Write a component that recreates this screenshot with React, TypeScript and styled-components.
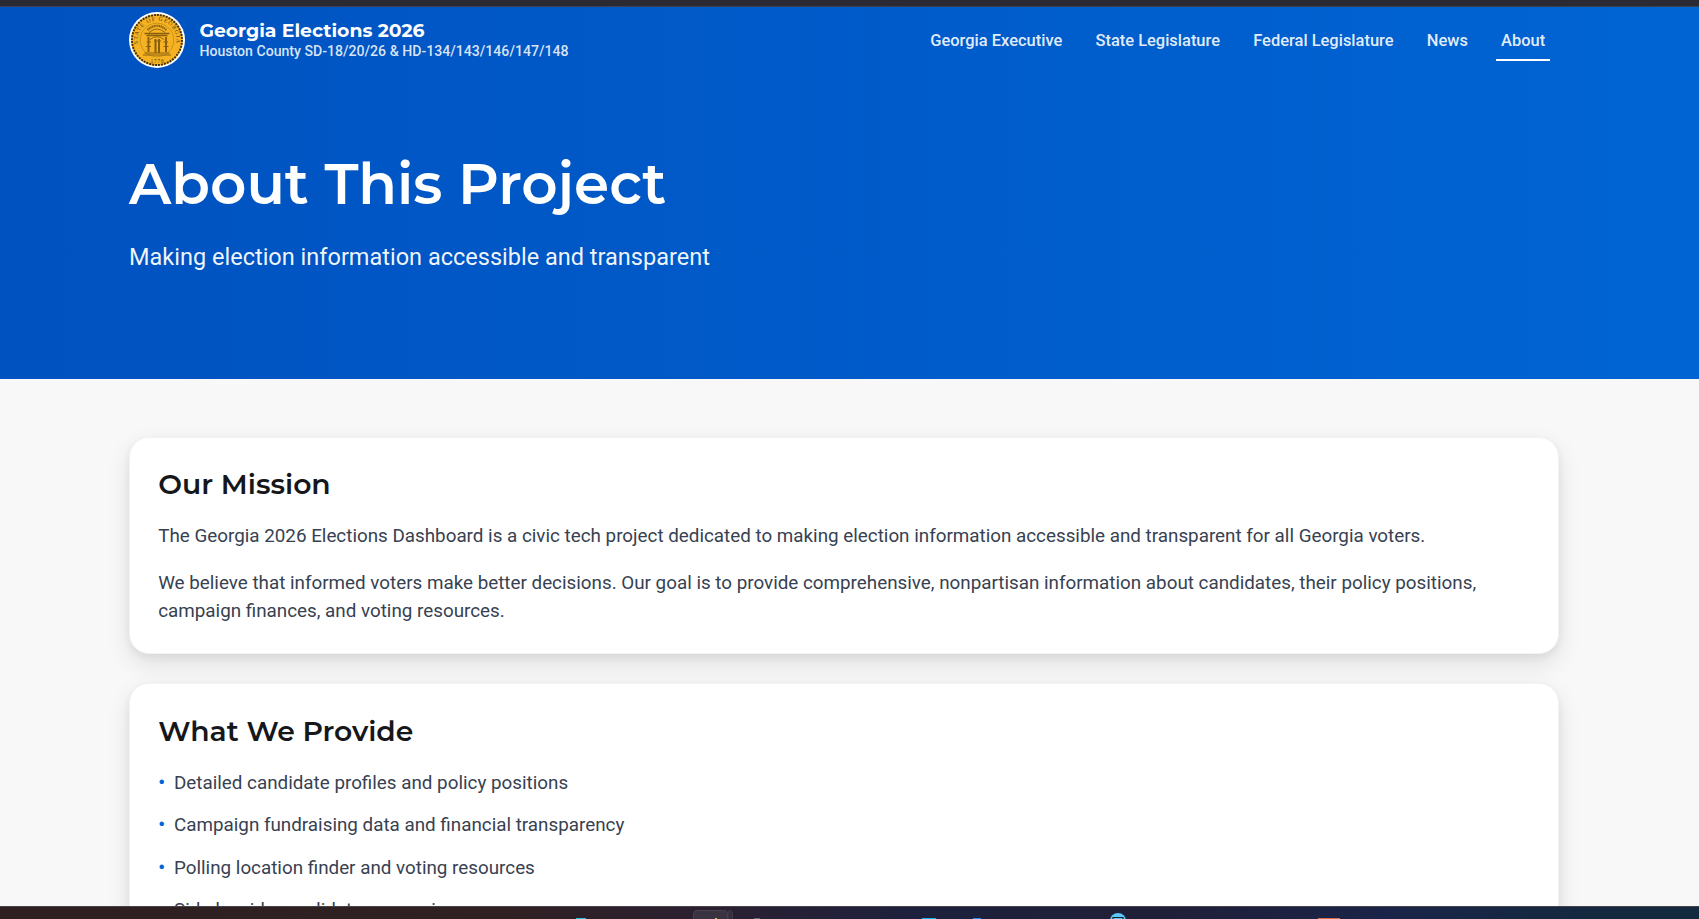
import React from "react";
import styled, { createGlobalStyle } from "styled-components";

const Global = createGlobalStyle`
  * { box-sizing: border-box; }
  html { font-size: 18.82px; }
  body { margin: 0; background: #f8f8f8; font-family: Roboto, sans-serif; }
  h1, h2, p, ul { margin: 0; padding: 0; }
`;

const display = "Montserrat, Inter, sans-serif";

const Screen = styled.div`
  height: 919px;
  display: flex;
  flex-direction: column;
  overflow: hidden;
`;

const BrowserEdge = styled.div`
  flex: none;
  height: 7px;
  background: #2b2a33;
  border-bottom: 1px solid #3d404d;
`;

const Viewport = styled.div`
  flex: 1;
  min-height: 0;
  overflow: hidden;
`;

const Hero = styled.header`
  height: 372px;
  padding: 5px 140px 0 129px;
  background: linear-gradient(90deg, #0052c0 0%, #0064d3 100%);
`;

const TopBar = styled.div`
  display: flex;
  align-items: center;
  justify-content: space-between;
  height: 56px;
  padding-right: 9px;
`;

const Brand = styled.div`
  display: flex;
  align-items: center;
  gap: 14.4px;
`;

const BrandName = styled.div`
  font-family: ${display};
  font-size: 1rem;
  font-weight: 700;
  line-height: 22px;
  color: #fff;
`;

const BrandSub = styled.div`
  font-size: 0.75rem;
  font-weight: 500;
  line-height: 18px;
  color: rgba(255, 255, 255, 0.85);
`;

const Nav = styled.nav`
  display: flex;
  gap: 23.6px;
`;

const NavLink = styled.a<{ $active?: boolean }>`
  padding: 11px 4.8px 8px;
  border-bottom: 2px solid ${(p) => (p.$active ? "#fff" : "transparent")};
  font-size: 0.875rem;
  font-weight: 500;
  line-height: 20px;
  color: rgba(255, 255, 255, 0.9);
`;

const HeroTitle = styled.h1`
  margin-top: 81px;
  font-family: ${display};
  font-size: 3rem;
  font-weight: 600;
  line-height: 69px;
  color: #fff;
`;

const HeroSub = styled.p`
  margin-top: 21px;
  font-size: 1.25rem;
  line-height: 36px;
  color: rgba(255, 255, 255, 0.95);
`;

const Main = styled.main`
  display: flex;
  flex-direction: column;
  gap: 28.7px;
  padding: 57.6px 140px 0 129px;
`;

const Card = styled.section`
  padding: 28.4px 28.2px 27.9px;
  border: 1px solid #f3f3f3;
  border-radius: 20px;
  background: #fff;
  box-shadow: 0 10px 24px rgba(0, 0, 0, 0.1), 0 3px 8px rgba(0, 0, 0, 0.06);
`;

const CardTitle = styled.h2`
  margin-bottom: 20.1px;
  font-family: ${display};
  font-size: 1.5rem;
  font-weight: 600;
  line-height: 36px;
  color: #15171a;
`;

const Paragraph = styled.p`
  font-size: 1rem;
  line-height: 1.5;
  color: #374151;
  & + & { margin-top: 18.8px; }
`;

const List = styled.ul`
  display: flex;
  flex-direction: column;
  gap: 0.75rem;
  padding-top: 0.4px;
  list-style: none;
`;

const Item = styled.li`
  display: flex;
  gap: 9.8px;
  font-size: 1rem;
  line-height: 1.5;
  color: #374151;
  &::before { content: "•"; width: 6px; font-weight: 700; color: #0066d6; }
`;

const Taskbar = styled.footer`
  flex: none;
  height: 13px;
  border-top: 1px solid #48424a;
  overflow: hidden;
  background: linear-gradient(90deg, #2e2021 0%, #2f2022 30%, #2b2032 42%, #1d213c 54%, #201f38 68%, #1a2448 82%, #14293f 93%, #13293d 100%);
`;

const brandSub = "Houston County SD-18/20/26 & HD-134/143/146/147/148";
const links = ["Georgia Executive", "State Legislature", "Federal Legislature", "News", "About"];
const provided = [
  "Detailed candidate profiles and policy positions",
  "Campaign fundraising data and financial transparency",
  "Polling location finder and voting resources",
  "Side-by-side candidate comparisons",
];

function Seal() {
  return (
    <svg width="56" height="56" viewBox="0 0 56 56">
      <circle cx="28" cy="28" r="28" fill="#fff" />
      <circle cx="28" cy="28" r="26" fill="#f5b324" />
      <circle cx="28" cy="28" r="25" fill="none" stroke="#3b2c12" strokeWidth="1.9" strokeDasharray="1.9 1.1" />
      <circle cx="28" cy="28" r="16.8" fill="none" stroke="#b98216" strokeWidth="0.7" />
      <defs>
        <path id="ring" d="M9.2 32.3 A19.3 19.3 0 1 1 46.8 32.3" />
      </defs>
      <text fontFamily="Liberation Serif, serif" fontSize="5.8" fill="#5b400d">
        <textPath href="#ring" startOffset="0.5" textLength="67">STATE OF GEORGIA</textPath>
      </text>
      <text x="28.4" y="50.5" textAnchor="middle" fontFamily="Liberation Serif, serif" fontSize="5.4" letterSpacing="0.8" fill="#5b400d">1776</text>
      <g fill="none" stroke="#8a6010">
        <path d="M18.5 18 Q28 9.5 37.5 18" strokeWidth="2.2" strokeDasharray="1.3 .5" />
        <path d="M20 20.5 Q28 13.5 36 20.5" strokeWidth="0.9" />
        <path d="M15.5 21.4 H40.5 M17.5 23.6 H38.5" strokeWidth="1.5" />
        <path d="M19.5 25 V40 M26.5 27 V41 M30 27 V41 M37 25 V40" strokeWidth="2" />
        <path d="M17.5 30 H22 M25 29 H32 M34.5 30 H39 M17 34.5 H22 M34.5 34.5 H39.5" strokeWidth="1.2" />
        <path d="M15.5 41 H40.5 M14 43 H42" strokeWidth="1.2" />
        <path d="M21 27.5 Q28 22 35 27.5" strokeWidth="0.9" />
      </g>
    </svg>
  );
}

function TaskIcons() {
  return (
    <svg width="1699" height="12" viewBox="0 907 1699 12" display="block">
      <path d="M728 919 V912 Q728 910.5 730 910.5 H730.5 Q732.5 911 732.5 914 V919" fill="#352f3d" stroke="#423c48" />
      <path d="M693.5 919 V914 Q693.5 910.5 697 910.5 H724 Q727.5 910.5 727.5 914 V919" fill="#393341" stroke="#48424f" />
      <rect x="576" y="918" width="10" height="1" fill="#20c5dc" />
      <path d="M715 919 V918 H717 V919" fill="#e2c12c" />
      <rect x="754" y="918" width="6" height="1" fill="#68666f" />
      <rect x="922" y="918" width="14" height="1" fill="#14b5ea" />
      <rect x="973" y="918" width="8" height="1" fill="#168bea" />
      <rect x="1318" y="918" width="22" height="1" fill="#d66c48" />
      <circle cx="1118" cy="921" r="8" fill="#5cc8fa" />
      <path d="M1113 919 V917.5 H1123 V919" fill="none" stroke="#15212d" strokeWidth="1.2" />
    </svg>
  );
}

export default function App() {
  return (
    <Screen>
      <Global />
      <BrowserEdge />
      <Viewport>
        <Hero>
          <TopBar>
            <Brand>
              <Seal />
              <div>
                <BrandName>Georgia Elections 2026</BrandName>
                <BrandSub>{brandSub}</BrandSub>
              </div>
            </Brand>
            <Nav>
              {links.map((l) => <NavLink key={l} $active={l === "About"}>{l}</NavLink>)}
            </Nav>
          </TopBar>
          <HeroTitle>About This Project</HeroTitle>
          <HeroSub>Making election information accessible and transparent</HeroSub>
        </Hero>
        <Main>
          <Card>
            <CardTitle>Our Mission</CardTitle>
            <Paragraph>
              The Georgia 2026 Elections Dashboard is a civic tech project dedicated to making election information accessible and transparent for all Georgia voters.
            </Paragraph>
            <Paragraph>
              We believe that informed voters make better decisions. Our goal is to provide comprehensive, nonpartisan information about candidates, their policy positions, campaign finances, and voting resources.
            </Paragraph>
          </Card>
          <Card>
            <CardTitle>What We Provide</CardTitle>
            <List>
              {provided.map((t) => <Item key={t}>{t}</Item>)}
            </List>
          </Card>
        </Main>
      </Viewport>
      <Taskbar><TaskIcons /></Taskbar>
    </Screen>
  );
}
